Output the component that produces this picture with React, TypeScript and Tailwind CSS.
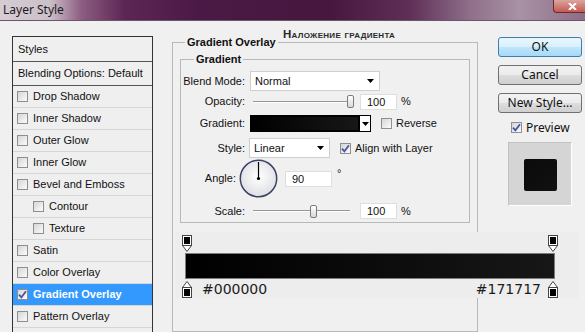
import React from "react";

const Check = ({ checked = false }: { checked?: boolean }) => (
  <span className="w-[11px] h-[11px] shrink-0 border border-[#8e8f8f] bg-[linear-gradient(135deg,#d6d6d6,#fbfbfb)] flex items-center justify-center">
    {checked && (
      <svg width="9" height="9" viewBox="0 0 9 9">
        <path d="M1 4.6 L3.4 7.4 L8 1.2" fill="none" stroke="#4658a0" strokeWidth="1.8" />
      </svg>
    )}
  </span>
);

const Arrow = () => (
  <svg width="7" height="4" viewBox="0 0 7 4">
    <path d="M0 0 H7 L3.5 4 Z" fill="#000" />
  </svg>
);

const TopStop = () => (
  <svg width="10" height="17" viewBox="0 0 10 17">
    <rect x="0.5" y="0.5" width="9" height="10" fill="#fff" stroke="#444" />
    <rect x="2" y="2" width="6" height="7" fill="#000" />
    <path d="M0.5 10.5 H9.5 L5 16.5 Z" fill="#fff" stroke="#444" />
  </svg>
);

const BottomStop = () => (
  <svg width="10" height="17" viewBox="0 0 10 17">
    <path d="M0.5 6.5 L5 0.5 L9.5 6.5 Z" fill="#fff" stroke="#444" />
    <rect x="0.5" y="6.5" width="9" height="10" fill="#fff" stroke="#444" />
    <rect x="2" y="8" width="6" height="7" fill="#000" />
  </svg>
);

const styleItems = [
  { name: "Drop Shadow" },
  { name: "Inner Shadow" },
  { name: "Outer Glow" },
  { name: "Inner Glow" },
  { name: "Bevel and Emboss" },
  { name: "Contour", indent: true },
  { name: "Texture", indent: true },
  { name: "Satin" },
  { name: "Color Overlay" },
  { name: "Gradient Overlay", checked: true, selected: true },
  { name: "Pattern Overlay" },
];

const StylesList = () => (
  <div className="ml-[12px] mt-[15px] w-[141px] h-[320px] shrink-0 border border-[#333] bg-[#efefef] flex flex-col">
    <div className="h-[25px] pl-[5px] flex items-center border-b border-[#555]">Styles</div>
    <div className="h-[24px] pl-[5px] flex items-center border-b border-[#555]">Blending Options: Default</div>
    {styleItems.map((item) => (
      <div
        key={item.name}
        className={`h-[22px] flex items-center border-b border-[#d6d6d6] ${
          item.indent ? "pl-[20px]" : "pl-[4px]"
        } ${item.selected ? "bg-[#3399ff] text-white font-bold" : ""}`}
      >
        <Check checked={item.checked} />
        <span className="ml-[5px]">{item.name}</span>
      </div>
    ))}
  </div>
);

const Slider = ({ before, after }: { before: number; after: number }) => (
  <div className="ml-[8px] flex items-center">
    <div className="h-[2px] bg-[linear-gradient(#959595_50%,#ffffff_50%)]" style={{ width: before }} />
    <div className="w-[7px] h-[13px] rounded-[2px] border border-[#7c7c7c] bg-[linear-gradient(#ffffff,#d8d8d8)]" />
    {after > 0 && <div className="h-[2px] bg-[linear-gradient(#959595_50%,#ffffff_50%)]" style={{ width: after }} />}
  </div>
);

const NumBox = ({ value, w = 37 }: { value: string; w?: number }) => (
  <div
    className="h-[16px] bg-white border border-[#dedede] pl-[6px] leading-[14px] text-[11px]"
    style={{ width: w }}
  >
    {value}
  </div>
);

const Label = ({ text, w = 64 }: { text: string; w?: number }) => (
  <div className="text-right shrink-0" style={{ width: w }}>
    {text}
  </div>
);

const GradientGroup = () => (
  <div className="mx-[7px] mt-[10px] h-[164px] border border-[#b8b8b8] flex flex-col">
    <div className="flex h-[13px] -mt-[7px]">
      <span className="ml-[13px] px-[2px] bg-[#f0f0f0] font-bold leading-[13px]">Gradient</span>
    </div>

    <div className="mt-[5px] h-[20px] flex items-center">
      <Label text="Blend Mode:" />
      <div className="ml-[5px] w-[130px] h-[20px] bg-white border border-[#cfcfcf] flex items-center justify-between pl-[4px] pr-[5px]">
        <span>Normal</span>
        <Arrow />
      </div>
    </div>

    <div className="mt-[3px] h-[15px] flex items-center">
      <Label text="Opacity:" />
      <Slider before={94} after={0} />
      <div className="ml-[6px]">
        <NumBox value="100" />
      </div>
      <span className="ml-[4px]">%</span>
    </div>

    <div className="mt-[6px] h-[17px] flex items-center">
      <Label text="Gradient:" />
      <div className="ml-[5px] w-[110px] h-[17px] border-2 border-black bg-[linear-gradient(90deg,#000000,#171717)]" />
      <div className="w-[11px] h-[17px] border border-l-0 border-black bg-white flex items-center justify-center">
        <Arrow />
      </div>
      <div className="ml-[10px]">
        <Check />
      </div>
      <span className="ml-[4px]">Reverse</span>
    </div>

    <div className="mt-[6px] h-[20px] flex items-center">
      <Label text="Style:" />
      <div className="ml-[4px] w-[81px] h-[20px] bg-white border border-[#cfcfcf] flex items-center justify-between pl-[4px] pr-[5px]">
        <span>Linear</span>
        <Arrow />
      </div>
      <div className="ml-[10px]">
        <Check checked />
      </div>
      <span className="ml-[4px]">Align with Layer</span>
    </div>

    <div className="mt-[1px] h-[39px] flex items-center">
      <Label text="Angle:" w={55} />
      <svg className="ml-[3px] shrink-0" width="39" height="39" viewBox="0 0 39 39">
        <defs>
          <radialGradient id="dial" cx="50%" cy="45%" r="60%">
            <stop offset="0%" stopColor="#ffffff" />
            <stop offset="100%" stopColor="#dcdde2" />
          </radialGradient>
        </defs>
        <circle cx="19.5" cy="19.5" r="18.2" fill="url(#dial)" stroke="#3c4266" strokeWidth="1.5" />
        <line x1="19.5" y1="19.5" x2="19.5" y2="3" stroke="#000" strokeWidth="1.2" />
        <circle cx="19.5" cy="19.5" r="1.6" fill="#000" />
      </svg>
      <div className="ml-[7px]">
        <NumBox value="90" w={47} />
      </div>
      <span className="ml-[5px] self-start mt-[9px] leading-[11px]">°</span>
    </div>

    <div className="mt-[5px] h-[16px] flex items-center">
      <Label text="Scale:" />
      <Slider before={57} after={33} />
      <div className="ml-[10px]">
        <NumBox value="100" />
      </div>
      <span className="ml-[4px]">%</span>
    </div>
  </div>
);

const Button = ({ label, focused = false }: { label: string; focused?: boolean }) => (
  <div
    className={`h-[20px] rounded-[3px] border flex items-center justify-center font-['Noto_Sans',sans-serif] text-[12px] leading-none text-[#111] ${
      focused
        ? "border-[#3c7fb1] bg-[linear-gradient(#eaf6fd_0%,#d9f0fc_50%,#bee6fd_51%,#a7d9f5_100%)]"
        : "border-[#707070] bg-[linear-gradient(#f2f2f2_0%,#ebebeb_50%,#dddddd_51%,#cfcfcf_100%)]"
    }`}
  >
    {label}
  </div>
);

const RightColumn = () => (
  <div className="ml-[20px] mt-[16px] w-[84px] shrink-0 flex flex-col gap-[8px]">
    <Button label="OK" focused />
    <Button label="Cancel" />
    <Button label="New Style..." />
    <div className="h-[13px] pl-[13px] flex items-center">
      <Check checked />
      <span className="ml-[4px] font-['Noto_Sans',sans-serif] text-[12px] leading-none">Preview</span>
    </div>
    <div className="ml-[10px] w-[64px] h-[64px] border border-[#c2c2c2] border-r-white border-b-white bg-[#d5d5d5] flex items-center justify-center">
      <div className="w-[33px] h-[32px] mt-[2px] rounded-[2px] bg-[linear-gradient(135deg,#0a0a0a,#111111)]" />
    </div>
  </div>
);

export default function App() {
  return (
    <div className="relative w-[585px] h-[332px] overflow-hidden bg-[#f0f0f0] flex flex-col font-['Liberation_Sans',Arial,sans-serif] text-[11px] text-[#111]">
      <div className="h-[21px] shrink-0 flex items-start border-b border-[#6a5868] bg-[linear-gradient(90deg,#d6ced4_0px,#cbbfc8_50px,#8c5c82_82px,#5c2654_125px,#4b1945_200px,#47173f_330px,#5f2f58_410px,#8f6f8a_470px,#a892a4_520px,#8d6c87_585px)]">
        <span className="ml-[3px] mt-[3px] font-['Noto_Sans',sans-serif] text-[12px] leading-[14px] text-[#1b1b1b]">
          Layer Style
        </span>
        <div className="ml-auto -mr-[6px] w-[38px] h-[13px] rounded-bl-[4px] border border-t-0 border-[#6e2a2a] bg-[linear-gradient(#dca5a0,#c45a50)] flex items-center justify-center">
          <svg width="9" height="7" viewBox="0 0 9 7">
            <path d="M1 0 L8 7 M8 0 L1 7" stroke="#fff" strokeWidth="2" />
          </svg>
        </div>
      </div>

      <div className="flex flex-1 min-h-0">
        <StylesList />

        <div className="ml-[19px] w-[306px] shrink-0 flex flex-col">
          <div className="mt-[6px] h-[14px] pl-[111px] leading-[14px] font-bold text-[11.5px] tracking-[0.3px] [font-variant:small-caps] text-[#2a2a2a]">
            Наложение градиента
          </div>
          <div className="mt-[1px] h-[300px] border border-[#b8b8b8] flex flex-col">
            <div className="flex h-[13px] -mt-[7px]">
              <span className="ml-[12px] px-[2px] bg-[#f0f0f0] font-bold leading-[13px]">Gradient Overlay</span>
            </div>
            <GradientGroup />
          </div>
        </div>

        <RightColumn />
      </div>

      {/* gradient editor strip pasted over the dialog */}
      <div className="absolute left-[175px] top-[232px] w-[404px] h-[66px] bg-[#ededed] flex flex-col">
        <div className="mt-[3px] h-[17px] flex justify-between pl-[7px] pr-[21px]">
          <TopStop />
          <TopStop />
        </div>
        <div className="mt-[1px] ml-[10px] w-[370px] h-[26px] border border-[#7d7d7d] bg-[linear-gradient(90deg,#000000,#0b0b0b_50%,#171717)]" />
        <div className="mt-[2px] h-[17px] flex items-center pl-[7px] pr-[21px] font-['DejaVu_Sans',sans-serif] text-[14px] leading-[17px] text-[#1c1c1c]">
          <BottomStop />
          <span className="ml-[10px]">#000000</span>
          <span className="ml-auto">#171717</span>
          <span className="ml-[7px] flex">
            <BottomStop />
          </span>
        </div>
      </div>
    </div>
  );
}
